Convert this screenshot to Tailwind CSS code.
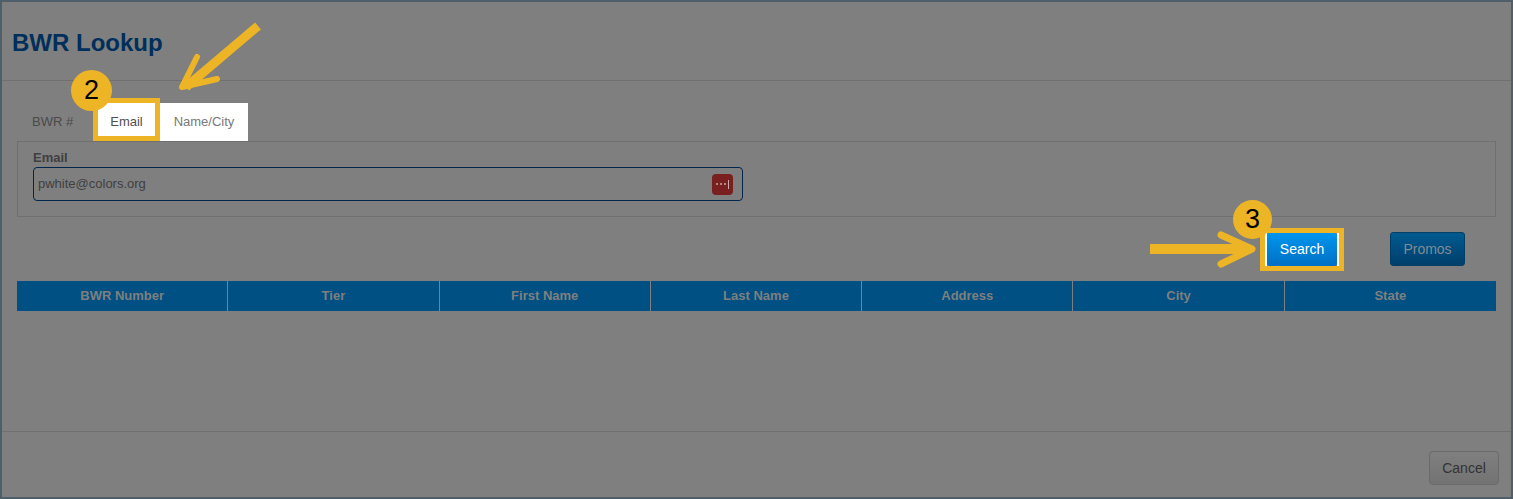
<!DOCTYPE html>
<html lang="en">
<head>
  <meta charset="UTF-8" />
  <title>BWR Lookup</title>
  <script src="https://cdn.jsdelivr.net/npm/@tailwindcss/browser@4"></script>
</head>
<body class="bg-[#7f7f7f] font-['Liberation_Sans',Arial,sans-serif] overflow-hidden">
  <div class="relative w-[1513px] h-[499px] border-2 border-[#4e5f6b] flex flex-col">

    <div class="h-[79px] shrink-0 border-b border-[#707070] pl-[10px] pt-[27px]">
      <h1 class="text-[24px] leading-[28px] font-bold text-[#002f5c]">BWR Lookup</h1>
    </div>

    <div class="h-[60px] shrink-0 px-[15px] flex items-end">
      <div class="flex items-center h-[38px] text-[13px]">
        <span class="pl-[15px] w-[81px] text-[#4a4a4a]">BWR #</span>
        <span class="w-[57px] h-[38px] flex items-center justify-center bg-white text-[#4f4f4f]">Email</span>
        <span class="ml-[5px] w-[88px] h-[38px] flex items-center justify-center bg-white text-[#77787a]">Name/City</span>
      </div>
    </div>

    <div class="mx-[15px] h-[76px] shrink-0 border border-[#707070] px-[15px] pt-[8px]">
      <label class="block text-[13px] leading-[16px] font-bold text-[#404040]">Email</label>
      <div class="mt-[1px] w-[710px] h-[34px] border border-[#00264d] rounded-[4px] flex items-center justify-between pl-[4px] pr-[9px]">
        <span class="text-[13px] text-[#404040]">pwhite@colors.org</span>
        <span class="w-[21px] h-[21px] rounded-[4px] bg-[#7a1f1f] flex items-center justify-center gap-[2px]">
          <i class="w-[2px] h-[2px] bg-[#c9a9a9] rounded-full"></i>
          <i class="w-[2px] h-[2px] bg-[#c9a9a9] rounded-full"></i>
          <i class="w-[2px] h-[2px] bg-[#c9a9a9] rounded-full"></i>
          <i class="w-[1px] h-[9px] bg-[#c9a9a9]"></i>
        </span>
      </div>
    </div>

    <div class="h-[64px] shrink-0 flex items-start justify-end pt-[15px] pr-[46px] gap-[53px]">
      <button class="mt-[1px] w-[70px] h-[33px] rounded-[3px] bg-linear-to-b from-[#0096ee] to-[#0070c4] text-white text-[14px]">Search</button>
      <button class="w-[75px] h-[34px] rounded-[3px] border border-[#003e66] bg-linear-to-b from-[#005a90] to-[#003f6c] text-[#7f8c96] text-[14px]">Promos</button>
    </div>

    <div class="mx-[15px] h-[30px] shrink-0 grid grid-cols-7 bg-[#005083] text-[13px] font-bold text-[#7f7f7f]">
      <div class="flex items-center justify-center border-r border-[#7f7f7f]">BWR Number</div>
      <div class="flex items-center justify-center border-r border-[#7f7f7f]">Tier</div>
      <div class="flex items-center justify-center border-r border-[#7f7f7f]">First Name</div>
      <div class="flex items-center justify-center border-r border-[#7f7f7f]">Last Name</div>
      <div class="flex items-center justify-center border-r border-[#7f7f7f]">Address</div>
      <div class="flex items-center justify-center border-r border-[#7f7f7f]">City</div>
      <div class="flex items-center justify-center">State</div>
    </div>

    <div class="flex-1"></div>

    <div class="h-[66px] shrink-0 border-t border-[#707070] flex items-start justify-end pt-[19px] pr-[12px]">
      <button class="w-[70px] h-[34px] rounded-[4px] border border-[#6a6a6a] bg-linear-to-b from-[#7f7f7f] to-[#737373] text-[#333333] text-[14px]">Cancel</button>
    </div>

    <!-- annotations over the page -->
    <div class="absolute left-[91px] top-[96px] w-[67px] h-[43px] border-[5px] border-[#edb526]"></div>
    <div class="absolute left-[69px] top-[68px] w-[41px] h-[41px] rounded-full bg-[#edb526] flex items-center justify-center text-[27px] text-black">2</div>

    <div class="absolute left-[1258px] top-[226px] w-[84px] h-[43px] border-[5px] border-[#edb526] bg-transparent">
      <div class="h-full w-full border-x-2 border-white"></div>
    </div>
    <div class="absolute left-[1231px] top-[198px] w-[39px] h-[39px] rounded-full bg-[#edb526] flex items-center justify-center text-[27px] text-black">3</div>

    <svg class="absolute left-0 top-0" width="1513" height="499" fill="none" stroke="#edb526" stroke-linecap="round" stroke-linejoin="round">
      <path d="M256 24 L184 85" stroke-width="9" stroke-linecap="butt"/>
      <path d="M195 55 L180 85 L215 77" stroke-width="6"/>
      <path d="M1148 247 L1245 247" stroke-width="10" stroke-linecap="butt"/>
      <path d="M1219 233 L1250 247 L1219 262" stroke-width="7"/>
    </svg>
  </div>
</body>
</html>
